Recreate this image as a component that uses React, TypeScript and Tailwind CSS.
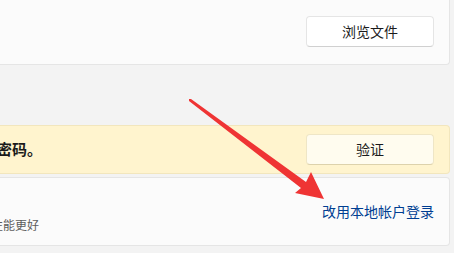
import React from "react";

const font = { fontFamily: '"Noto Sans CJK SC", "Noto Sans", sans-serif' };

const Arrow = () => (
  <svg className="absolute left-0 top-0 pointer-events-none" width="454" height="253" viewBox="0 0 454 253">
    <polygon points="189,99 191,99 306,182 311,172 324,199 295,193 301,188 189,101" fill="#ef3434" />
  </svg>
);

const App = () => {
  return (
    <div className="relative w-[454px] h-[253px] overflow-hidden bg-[#f3f3f3]" style={font}>
      <div className="flex flex-col pr-[4px]">
        <div className="h-[65px] bg-[#fbfbfb] border-b border-r border-[#e5e5e5] rounded-br-[4px] flex items-start justify-end pt-[16px] pr-[15px]">
          <button className="w-[128px] h-[31px] bg-white border border-[#e5e5e5] border-b-[#d0d0d0] rounded-[4px] text-[14px] text-[#1b1b1b]">
            浏览文件
          </button>
        </div>

        <div className="h-[60px]" />

        <div className="h-[49px] bg-[#fff4ce] border border-l-0 border-[#f2e6bd] rounded-r-[4px] flex items-center justify-between pr-[15px]">
          <span className="ml-[-3px] text-[15px] font-bold text-[#1a1a1a]">密码。</span>
          <button className="w-[128px] h-[31px] bg-[#fffcef] border border-[#efe6c6] border-b-[#ddd2ac] rounded-[4px] text-[14px] text-[#1b1b1b]">
            验证
          </button>
        </div>

        <div className="h-[3px]" />

        <div className="h-[69px] bg-[#fbfbfb] border border-l-0 border-[#e5e5e5] rounded-r-[4px] flex items-center justify-between pr-[15px]">
          <div className="flex flex-col pt-[26px]">
            <span className="ml-[-9px] text-[12px] text-[#5d5d5d]">性能更好</span>
          </div>
          <a className="text-[14px] text-[#003e92] cursor-pointer">改用本地帐户登录</a>
        </div>
      </div>
      <Arrow />
    </div>
  );
};

export default App;
